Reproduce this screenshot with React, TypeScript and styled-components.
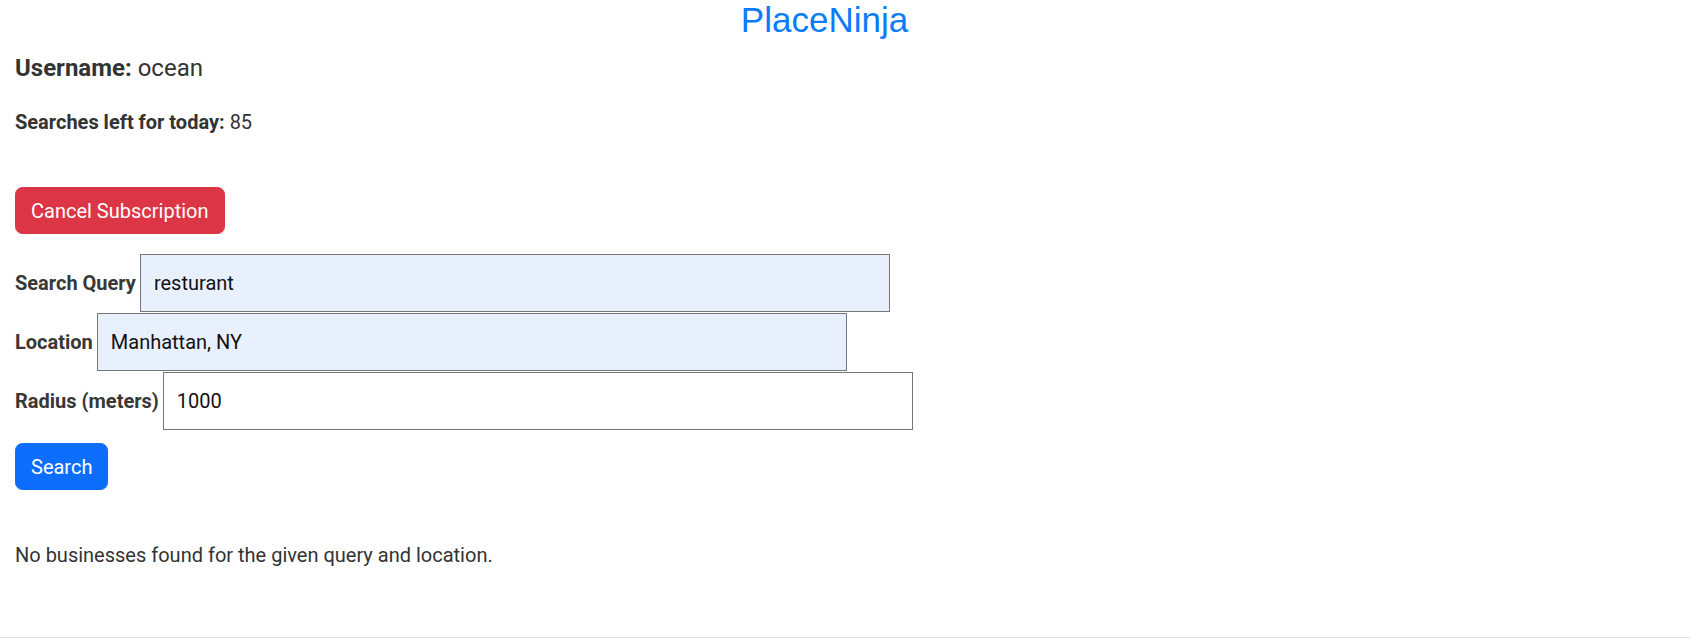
import styled, { createGlobalStyle } from 'styled-components';

const GlobalStyle = createGlobalStyle`
  html, body {
    margin: 0;
    padding: 0;
    background: #fff;
  }
  body {
    font-family: Roboto, 'Noto Sans', sans-serif;
    color: #333;
  }
`;

const fields = [
  { label: 'Search Query', value: 'resturant', autofilled: true },
  { label: 'Location', value: 'Manhattan, NY', autofilled: true },
  { label: 'Radius (meters)', value: '1000', autofilled: false },
];

export default function App() {
  return (
    <>
      <GlobalStyle />
      <Page>
        <Title>PlaceNinja</Title>
        <Content>
          <UserLine>
            <b>Username:</b> ocean
          </UserLine>
          <QuotaLine>
            <b>Searches left for today:</b> 85
          </QuotaLine>
          <ButtonRow>
            <Button $variant='danger'>Cancel Subscription</Button>
          </ButtonRow>
          <Form onSubmit={(e) => e.preventDefault()}>
            {fields.map((f) => (
              <FieldRow key={f.label}>
                <Label>{f.label}</Label>
                <Input defaultValue={f.value} $autofilled={f.autofilled} />
              </FieldRow>
            ))}
            <SearchRow>
              <Button $variant='primary' type='submit'>Search</Button>
            </SearchRow>
          </Form>
          <Message>No businesses found for the given query and location.</Message>
        </Content>
        <Footer />
      </Page>
    </>
  );
}

const Page = styled.div`
  display: flex;
  flex-direction: column;
  min-height: 638px;
`;

const Title = styled.h1`
  margin: 0;
  padding-right: 41px;
  text-align: center;
  font-family: 'Liberation Sans', Arial, sans-serif;
  font-weight: 400;
  font-size: 35px;
  line-height: 40px;
  color: #0a7cf8;
`;

const Content = styled.main`
  display: flex;
  flex-direction: column;
  align-items: flex-start;
  padding: 0 15px;
`;

const UserLine = styled.h5`
  margin: 14.4px 0 0;
  font-size: 24px;
  font-weight: 400;
  line-height: 1.2;
  color: #333;

  b {
    font-weight: 700;
  }
`;

const QuotaLine = styled.p`
  margin: 24px 0 0;
  font-size: 20px;
  line-height: 1.5;

  b {
    font-weight: 700;
  }
`;

const ButtonRow = styled.div`
  margin-top: 50px;
`;

const Button = styled.button<{ $variant: 'primary' | 'danger' }>`
  font-family: Roboto, sans-serif;
  font-size: 20px;
  line-height: 1.5;
  padding: 7.5px 15px;
  border-radius: 7.5px;
  color: #fff;
  cursor: pointer;
  border: 1px solid ${(p) => (p.$variant === 'danger' ? '#dc3545' : '#0d6efd')};
  background: ${(p) => (p.$variant === 'danger' ? '#dc3545' : '#0d6efd')};
`;

const Form = styled.form`
  display: flex;
  flex-direction: column;
  gap: 1px;
  margin-top: 20px;
`;

const FieldRow = styled.div`
  display: flex;
  align-items: center;
  gap: 4px;
`;

const Label = styled.label`
  font-size: 20px;
  font-weight: 700;
  line-height: 1.5;
  color: #383838;
`;

const Input = styled.input<{ $autofilled: boolean }>`
  box-sizing: border-box;
  width: 750px;
  height: 58px;
  padding: 0 13px;
  border: 1px solid #767676;
  border-radius: 0;
  font-family: Roboto, sans-serif;
  font-size: 20px;
  color: #111;
  background: ${(p) => (p.$autofilled ? '#e8f0fe' : '#fff')};
  outline: none;
`;

const SearchRow = styled.div`
  margin-top: 12px;
`;

const Message = styled.p`
  margin: 49.5px 0 0;
  font-size: 20px;
  line-height: 1.5;
  color: #333;
`;

const Footer = styled.footer`
  margin-top: auto;
  height: 1px;
  border-bottom: 1px solid #e0e0e0;
`;
